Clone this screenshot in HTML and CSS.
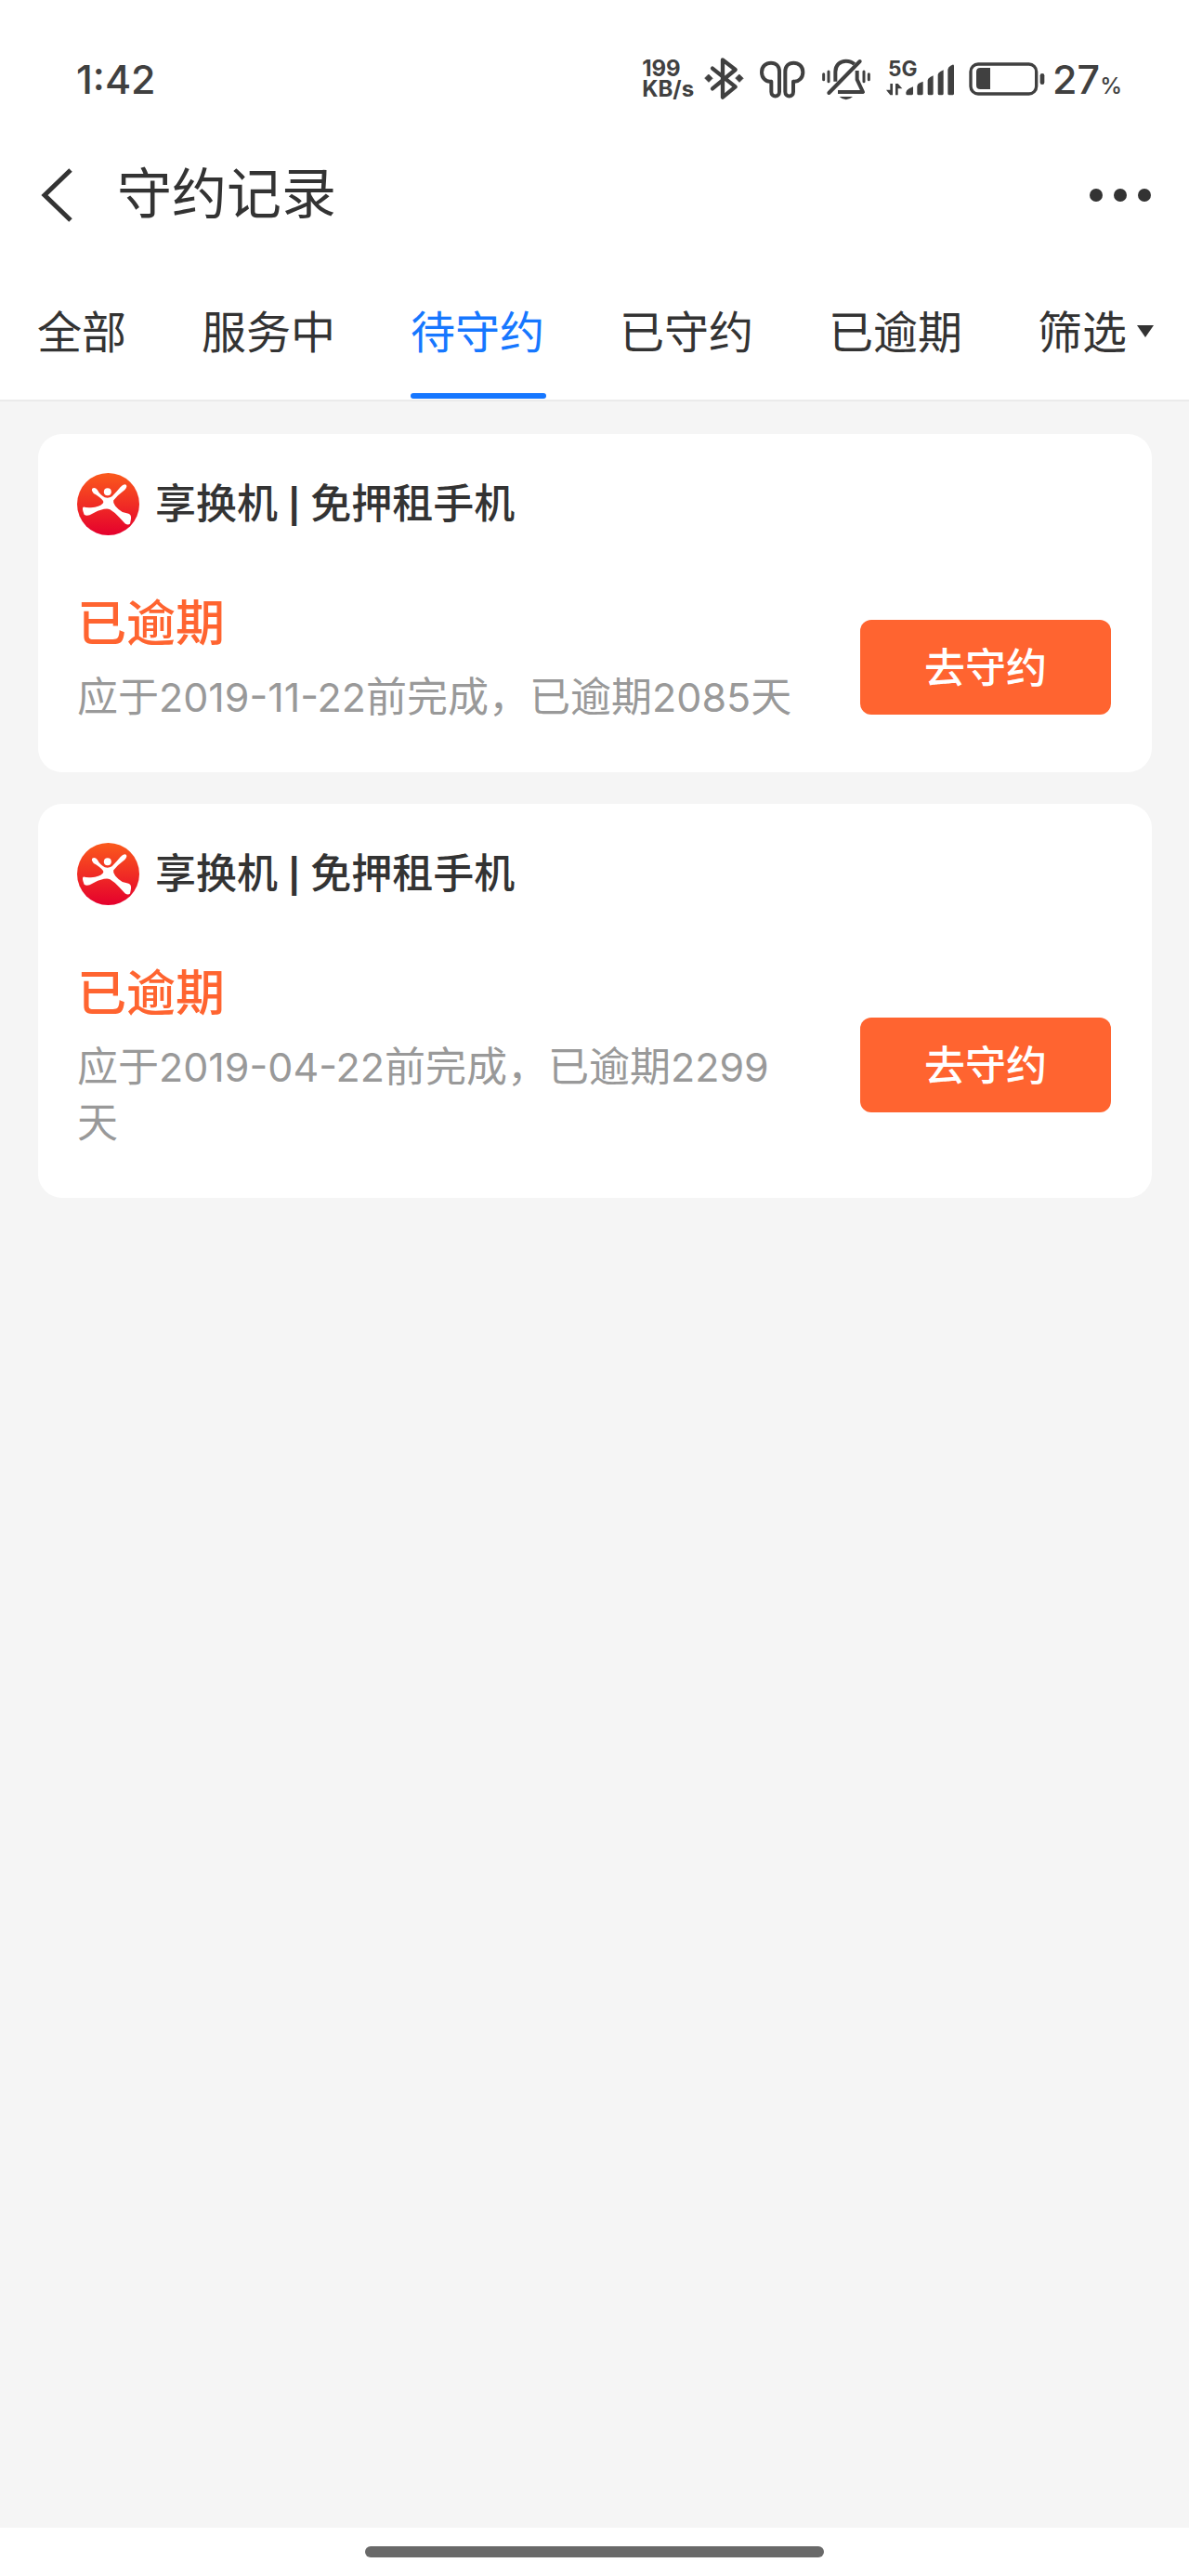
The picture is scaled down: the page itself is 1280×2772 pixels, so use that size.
FILE: index.html
```html
<!DOCTYPE html>
<html lang="zh-CN">
<head>
  <meta charset="UTF-8">
  <meta name="viewport" content="width=device-width, initial-scale=1">
  <title>守约记录</title>
  <link rel="stylesheet" href="styles.css">
</head>
<body>
  <header class="top">
    <div class="status-bar">
      <span class="time">1:42</span>
      <div class="status-icons">
        <span class="speed">199<br>KB/s</span>
        <!-- bluetooth -->
        <svg width="50" height="50" viewBox="261 60 150 150" fill="none" stroke="currentColor" stroke-width="13" stroke-linecap="round" stroke-linejoin="round">
          <path d="M297 101L371 160L330 194V73L371 105L297 166"/>
          <path d="M285 121l12 12-12 12-12-12zM384 121l12 12-12 12-12-12z" fill="currentColor" stroke-width="3"/>
        </svg>
        <!-- earbuds -->
        <svg width="58" height="50" viewBox="435 60 174 150" fill="none" stroke="currentColor" stroke-width="12" stroke-linecap="round" stroke-linejoin="round">
          <path d="M486 143C469 145 456 131 456 113C456 94 470 83 486 83C502 83 513 94 513 111V176C513 195 487 195 487 176V143"/>
          <path d="M559 143C576 145 589 131 589 113C589 94 575 83 559 83C543 83 532 94 532 111V176C532 195 558 195 558 176V143"/>
        </svg>
        <!-- muted bell -->
        <svg width="62" height="50" viewBox="633 60 186 150" fill="none" stroke="currentColor" stroke-width="12" stroke-linejoin="round">
          <path d="M673 180L773 78" stroke-linecap="round"/>
          <path d="M694 143V112C694 90 709 77 728 77C740 77 748 80 755 87"/>
          <path d="M764 108V137L783 177H702"/>
          <path d="M656 119v18M672 111v32M786 111v32M802 119v18" stroke-width="9" stroke-linecap="round"/>
          <path d="M707 192H750Q728 212 707 192Z" fill="currentColor" stroke="none"/>
        </svg>
        <!-- 5G signal -->
        <svg width="82" height="50" viewBox="63 60 246 150" fill="currentColor">
          <text class="net" x="84" y="127">5G</text>
          <path d="M91 150h8v37h-8l-13-17h13zM108 187v-37h8l14 16h-14v21z"/>
          <path d="M142 178q2-8 10-12l13-6v22q0 5-5 5h-13q-5 0-5-5zM178 158q1-7 8-10l11-5v39q0 5-5 5h-9q-5 0-5-5zM212 139q1-6 8-10l10-5v58q0 5-5 5h-8q-5 0-5-5zM245 121q1-6 8-10l10-5v76q0 5-5 5h-8q-5 0-5-5zM277 104q1-8 9-12l6-3q5-2 5 4v89q0 5-5 5h-10q-5 0-5-5z"/>
        </svg>
        <!-- battery -->
        <svg width="86" height="50" viewBox="333 60 258 150" fill="currentColor">
          <rect x="351" y="87" width="212" height="96" rx="24" fill="none" stroke="currentColor" stroke-width="10"/>
          <path d="M414 99v69h-32q-13 0-13-13v-43q0-13 13-13z"/>
          <rect x="575" y="117" width="14" height="36" rx="7"/>
        </svg>
        <span class="battery-text">27<small>%</small></span>
      </div>
    </div>

    <div class="title-bar">
      <button class="icon-btn" type="button" aria-label="返回">
        <svg width="36" height="60" viewBox="0 0 36 60" fill="none" stroke="currentColor" stroke-width="5"><path d="M32 3L4 30L32 57"/></svg>
      </button>
      <h1>守约记录</h1>
      <button class="icon-btn" type="button" aria-label="更多">
        <svg width="68" height="16" viewBox="0 0 68 16" fill="currentColor"><circle cx="8" cy="8" r="7"/><circle cx="34" cy="8" r="7"/><circle cx="60" cy="8" r="7"/></svg>
      </button>
    </div>

    <nav class="tabs">
      <button class="tab" type="button">全部</button>
      <button class="tab" type="button">服务中</button>
      <button class="tab active" type="button" aria-current="page">待守约</button>
      <button class="tab" type="button">已守约</button>
      <button class="tab" type="button">已逾期</button>
      <button class="tab filter" type="button">筛选
        <svg width="18" height="18" viewBox="0 0 18 18" fill="currentColor"><path d="M0 5H18L9 18Z"/></svg>
      </button>
    </nav>
  </header>

  <!-- logo shared by the cards -->
  <svg class="defs" width="0" height="0" aria-hidden="true">
    <defs>
      <linearGradient id="logoBg" x1="0" y1="0" x2="0" y2="1">
        <stop offset="0" stop-color="#fb5a1c"/>
        <stop offset="1" stop-color="#e5002d"/>
      </linearGradient>
    </defs>
    <symbol id="logo" viewBox="39 42 202 202">
      <circle cx="140" cy="143" r="101" fill="url(#logoBg)"/>
      <circle cx="138" cy="103" r="12" fill="#fff"/>
      <path fill="#fff" d="M87 99Q86 90 94 90Q100 90 105 97Q114 114 129 121Q141 125 152 118Q166 104 180 87Q190 77 197 80Q204 86 194 96Q172 112 157 131Q155 140 163 149Q172 160 186 169L206 174Q215 177 214 190L211 206Q205 213 195 206L176 186Q160 168 146 160Q138 156 126 159Q104 164 90 173Q72 184 62 177Q53 154 60 152Q70 155 84 154Q112 153 123 140Q127 134 119 127Q110 119 101 113Q90 108 87 99Z"/>
    </symbol>
  </svg>

  <main class="list">
    <section class="card">
      <div class="shop">
        <svg class="logo"><use href="#logo"/></svg>
        <h2>享换机 <span class="bar">|</span> 免押租手机</h2>
      </div>
      <div class="card-body">
        <div class="info">
          <p class="state">已逾期</p>
          <p class="desc">应于<span class="num">2019-11-22</span>前完成，已逾期<span class="num">2085</span>天</p>
        </div>
        <button class="go" type="button">去守约</button>
      </div>
    </section>

    <section class="card">
      <div class="shop">
        <svg class="logo"><use href="#logo"/></svg>
        <h2>享换机 <span class="bar">|</span> 免押租手机</h2>
      </div>
      <div class="card-body">
        <div class="info">
          <p class="state">已逾期</p>
          <p class="desc">应于<span class="num">2019-04-22</span>前完成，已逾期<span class="num">2299</span>天</p>
        </div>
        <button class="go" type="button">去守约</button>
      </div>
    </section>
  </main>

  <footer class="home-bar"><span class="pill"></span></footer>
</body>
</html>
```
FILE: styles.css
```css
* { box-sizing: border-box; margin: 0; padding: 0; }
body { min-height: 100vh; display: flex; flex-direction: column; background: #f5f5f5; color: #333; font-family: "Noto Sans CJK SC", sans-serif; }
button { background: none; border: none; font: inherit; color: inherit; cursor: pointer; }
svg { display: block; flex: none; }
.defs { position: absolute; }

.top { background: #fff; border-bottom: 2px solid #ebebeb; }

.status-bar { display: flex; justify-content: space-between; align-items: center; padding: 60px 72px 0 82px; color: #404040; font-family: Inter, sans-serif; }
.status-icons { display: flex; align-items: center; gap: 8px; }
.time, .battery-text { font-size: 43px; line-height: 50px; font-weight: 500; }
.battery-text small { font-size: 24px; line-height: 24px; }
.speed { font-size: 24px; line-height: 22px; font-weight: 700; }
.net { font-size: 68px; font-weight: 700; }

.title-bar { display: flex; align-items: center; padding: 48px 40px 0 44px; height: 152px; }
.title-bar h1 { flex: 1; margin-left: 46px; padding-bottom: 10px; font-size: 59px; line-height: 84px; font-weight: 400; }
.icon-btn { display: flex; align-items: center; }

.tabs { display: flex; justify-content: space-between; padding: 47px 38px 0 40px; }
.tab { height: 121px; padding-bottom: 26px; border-bottom: 6px solid transparent; font-size: 48px; line-height: 72px; white-space: nowrap; }
.tab.active { position: relative; color: #1677ff; }
.tab.active::after { content: ""; position: absolute; left: 0; right: -2px; bottom: -5px; height: 6px; border-radius: 3px; background: #1677ff; }
.filter { display: flex; align-items: center; gap: 11px; }

.list { flex: 1; display: flex; flex-direction: column; gap: 34px; padding: 35px 40px 35px 41px; }
.card { background: #fff; border-radius: 26px; padding: 42px 44px 24px 42px; }
.shop { display: flex; align-items: center; gap: 17px; margin-bottom: 53px; }
.shop h2 { padding-bottom: 7px; font-size: 44px; line-height: 60px; font-weight: 500; }
.bar { margin: 0 1px; font-family: Inter, sans-serif; font-size: 36px; line-height: 1; font-weight: 700; }
.logo { width: 67px; height: 67px; }
.card-body { display: flex; align-items: center; justify-content: space-between; gap: 64px; }
.info { flex: 1; padding-bottom: 30px; }
.state { margin-bottom: 12px; font-size: 53px; line-height: 76px; font-weight: 500; color: #ff6430; }
.desc { font-size: 44px; line-height: 60px; color: #999; }
.num { font-family: Inter, sans-serif; font-size: 43px; line-height: 1; white-space: nowrap; }
.go { flex: none; width: 270px; height: 102px; padding-bottom: 5px; border-radius: 12px; background: #ff6430; color: #fff; font-size: 44px; font-weight: 500; }

.home-bar { display: flex; justify-content: center; align-items: center; height: 52px; background: #fff; }
.pill { width: 494px; height: 12px; border-radius: 6px; background: #696969; }
```
